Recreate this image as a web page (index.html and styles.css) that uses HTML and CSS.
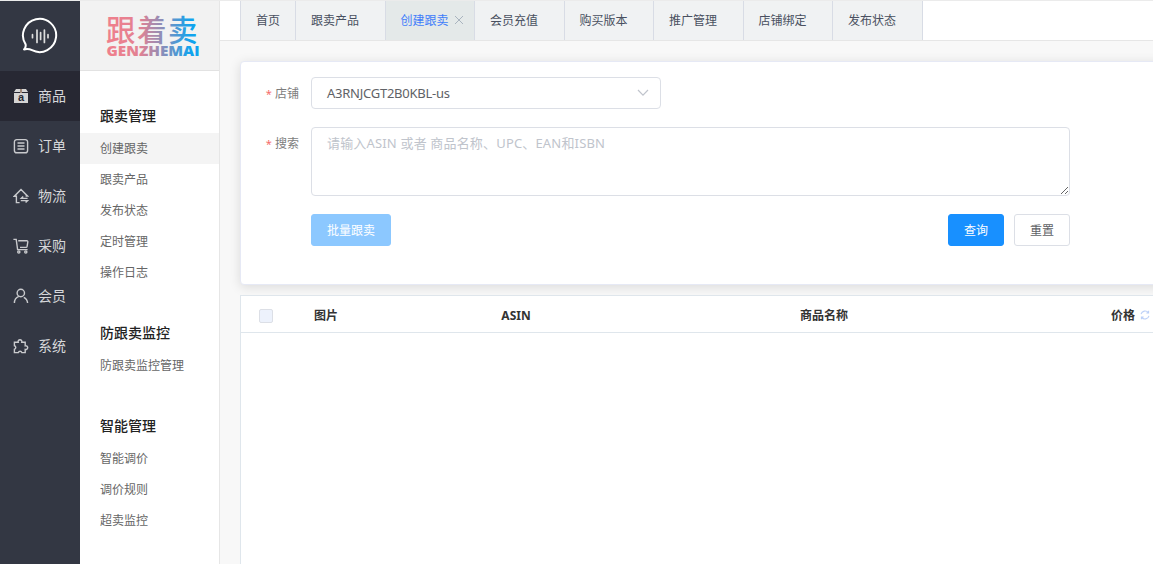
FILE: index.html
```html
<!DOCTYPE html>
<html lang="zh-CN">
<head>
    <meta charset="UTF-8">
    <meta name="viewport" content="width=device-width, initial-scale=1.0">
    <title>创建跟卖</title>
    <link rel="stylesheet" href="styles.css">
</head>
<body>
    <div class="app">
        <nav class="sidebar">
            <div class="logo">
                <svg width="38" height="40" viewBox="0 0 38 40" fill="none" stroke="#fff" stroke-linecap="round">
                    <path d="M5.6 28.4A16.6 16.6 0 1 1 12 34.2Q8.5 32.4 4 33.4Q6.2 31.4 5.6 28.4" stroke-width="2" stroke-linejoin="round"/>
                    <path d="M12.5 18.7v3M17 14v12.5M20.6 16.5v7M24.4 14v12.5M28 18.7v3" stroke-width="1.7" stroke="#ddd"/>
                </svg>
            </div>
            <a class="nav-item active">
                <svg class="nav-icon" viewBox="0 0 16 16">
                    <path d="M3 1h4v3H1zM9 1h4l2 3H9zM1 5h14v10H1z" fill="#d4d4d4"/>
                    <path d="M7 1h2v4H7z" fill="#a08878"/>
                    <text x="8" y="13.4" class="box-letter">a</text>
                </svg>
                <span>商品</span>
            </a>
            <a class="nav-item">
                <svg class="nav-icon line" viewBox="0 0 16 16">
                    <path d="M3.8 1.6h8.4a2.4 2.4 0 0 1 2.4 2.4v8.4a2.4 2.4 0 0 1-2.4 2.4H3.8a2.4 2.4 0 0 1-2.4-2.4V4a2.4 2.4 0 0 1 2.4-2.4zM4.5 5h7M4.5 8h7M4.5 11h7"/>
                </svg>
                <span>订单</span>
            </a>
            <a class="nav-item">
                <svg class="nav-icon line" viewBox="0 0 16 16">
                    <path d="M6.6 14.6H3.4V8.2H1.4L8 1.6l6.4 6.4h-1.8M14.6 10.4H8.2l2-2M7.8 12.6h6.8l-2 2"/>
                </svg>
                <span>物流</span>
            </a>
            <a class="nav-item">
                <svg class="nav-icon line" viewBox="0 0 16 16">
                    <path d="M.4 1.4h2.8l1.4 10.2h10M5.2 2.8h8.6q1.2 0 1 1.2l-.7 4.4q-.2 1-1.1 1H7"/>
                    <circle cx="5.8" cy="14" r="1.1"/>
                    <circle cx="12.8" cy="14" r="1.1"/>
                </svg>
                <span>采购</span>
            </a>
            <a class="nav-item">
                <svg class="nav-icon line" viewBox="0 0 16 16">
                    <circle cx="7.8" cy="5" r="3.7"/>
                    <path d="M1.4 15c0-3.2 1.8-5.6 4.4-6.6M10.8 9.4c2.2 1.1 3.6 3 3.8 5.6"/>
                </svg>
                <span>会员</span>
            </a>
            <a class="nav-item">
                <svg class="nav-icon line" viewBox="0 0 16 16">
                    <path d="M1.4 4.2h3.8a1.9 1.9 0 1 1 3.6 0h3.4v3.6a1.9 1.9 0 1 1 0 3.6v3.2H8.9a1.9 1.9 0 0 0-3.6 0H1.4v-3.4a1.8 1.8 0 0 0 0-3.5z"/>
                </svg>
                <span>系统</span>
            </a>
        </nav>

        <aside class="submenu">
            <div class="brand">
                <svg width="100" height="48" viewBox="0 0 100 48">
                    <defs>
                        <linearGradient id="brandFill" gradientUnits="userSpaceOnUse" x1="2" y1="0" x2="94" y2="0">
                            <stop offset="0" stop-color="#f07f8c"/>
                            <stop offset=".36" stop-color="#e28193"/>
                            <stop offset=".68" stop-color="#6e92c6"/>
                            <stop offset=".9" stop-color="#12a3ee"/>
                        </linearGradient>
                    </defs>
                    <text x="1" y="27" class="brand-cn">跟着卖</text>
                    <text x="1.5" y="41.5" class="brand-en" textLength="93" lengthAdjust="spacingAndGlyphs">GENZHEMAI</text>
                </svg>
            </div>
            <div class="menu-group">
                <h3>跟卖管理</h3>
                <a class="active">创建跟卖</a>
                <a>跟卖产品</a>
                <a>发布状态</a>
                <a>定时管理</a>
                <a>操作日志</a>
            </div>
            <div class="menu-group">
                <h3>防跟卖监控</h3>
                <a>防跟卖监控管理</a>
            </div>
            <div class="menu-group">
                <h3>智能管理</h3>
                <a>智能调价</a>
                <a>调价规则</a>
                <a>超卖监控</a>
            </div>
        </aside>

        <main class="main">
            <div class="tabs">
                <a class="tab home">首页</a>
                <a class="tab">跟卖产品</a>
                <a class="tab active">创建跟卖
                    <svg class="close" width="10" height="10" viewBox="0 0 10 10"><path d="M1 1l8 8M9 1l-8 8"/></svg>
                </a>
                <a class="tab">会员充值</a>
                <a class="tab">购买版本</a>
                <a class="tab">推广管理</a>
                <a class="tab">店铺绑定</a>
                <a class="tab">发布状态</a>
            </div>

            <section class="card">
                <div class="form-row">
                    <label><i>*</i> 店铺</label>
                    <div class="select">
                        <span>A3RNJCGT2B0KBL-us</span>
                        <svg width="12" height="8" viewBox="0 0 12 8"><path d="M1 1l5 5.2L11 1"/></svg>
                    </div>
                </div>
                <div class="form-row">
                    <label><i>*</i> 搜索</label>
                    <textarea class="search" placeholder="请输入ASIN 或者 商品名称、UPC、EAN和ISBN"></textarea>
                </div>
                <div class="buttons">
                    <button class="btn disabled">批量跟卖</button>
                    <div class="right">
                        <button class="btn primary">查询</button>
                        <button class="btn">重置</button>
                    </div>
                </div>
            </section>

            <section class="table">
                <div class="table-head">
                    <div><span class="checkbox"></span></div>
                    <div>图片</div>
                    <div>ASIN</div>
                    <div>商品名称</div>
                    <div>价格
                        <svg class="refresh" width="10" height="10" viewBox="0 0 12 12"><path d="M1.2 5A5 5 0 0 1 10 3.2M10.3.8v2.8H7.6M10.8 7A5 5 0 0 1 2 8.8M1.7 11.2V8.4h2.7"/></svg>
                    </div>
                </div>
            </section>
        </main>
    </div>
</body>
</html>
```
FILE: styles.css
```css
* {
    box-sizing: border-box;
}
body {
    margin: 0;
    height: 100vh;
    overflow: hidden;
    font-family: "Noto Sans", "Noto Sans CJK SC", sans-serif;
    font-size: 12px;
    color: #606266;
    background: #f8f8f8;
}
.app {
    display: flex;
    height: 100vh;
    border-top: 1px solid #ebebeb;
}

/* left dark nav */
.sidebar {
    flex: none;
    width: 80px;
    background: #333743;
}
.logo {
    display: flex;
    height: 70px;
    padding: 15px 0 0 20px;
}
.nav-item {
    display: flex;
    align-items: center;
    gap: 9px;
    height: 50px;
    padding-left: 13px;
    font-size: 14px;
    color: #d6d7da;
}
.nav-item span {
    padding-bottom: 2px;
}
.nav-item.active {
    background: #272833;
}
.nav-icon {
    width: 16px;
    height: 16px;
}
.line {
    fill: none;
    stroke: #c9cacd;
    stroke-width: 1.4;
}
.box-letter {
    font: bold 11px "Liberation Sans", sans-serif;
    text-anchor: middle;
    fill: #272833;
}

/* second level menu */
.submenu {
    flex: none;
    width: 140px;
    background: #fff;
    border-right: 1px solid #e6e6e6;
}
.brand {
    height: 70px;
    padding: 13px 0 0 25px;
    background: #f2f2f2;
    border-bottom: 1px solid #e2e2e2;
}
.brand svg {
    display: block;
}
.brand-cn {
    font: 500 29.5px "Noto Sans CJK SC", sans-serif;
    letter-spacing: 1.5px;
    fill: url(#brandFill);
}
.brand-en {
    font: 800 14px "Open Sans", sans-serif;
    fill: url(#brandFill);
}
.menu-group {
    padding-top: 28px;
}
.menu-group h3 {
    margin: 0;
    padding-left: 20px;
    font-size: 14px;
    font-weight: 500;
    line-height: 34px;
    color: #222;
}
.menu-group a {
    display: block;
    padding-left: 20px;
    line-height: 31px;
    color: #666;
}
.menu-group a.active {
    background: #f4f4f4;
}

/* tabs */
.main {
    flex: 1;
    min-width: 0;
    overflow: hidden;
    display: flex;
    flex-direction: column;
}
.tabs {
    flex: none;
    display: flex;
    height: 40px;
    padding-left: 20px;
    background: #fff;
    border-bottom: 1px solid #e6e6e6;
}
.tab {
    display: flex;
    align-items: center;
    flex: none;
    width: 89.5px;
    padding: 0 0 1px 15px;
    background: #f0f2f3;
    border-right: 1px solid #d8dce5;
    color: #495060;
}
.tab.home {
    width: 56px;
    border-left: 1px solid #d8dce5;
}
.tab.active {
    background: #e4e9e9;
    color: #3f7dfa;
}
.close {
    margin-left: 5px;
    fill: none;
    stroke: #a9b4bf;
}

/* search form */
.card {
    flex: none;
    width: 1000px;
    height: 224px;
    margin: 20px 0 0 20px;
    padding: 15px 0 0 15px;
    background: #fff;
    border: 1px solid #e6e9f5;
    border-radius: 4px;
    box-shadow: 0 2px 12px rgba(0, 0, 0, 0.12);
}
.form-row {
    display: flex;
    margin-bottom: 18px;
}
.form-row label {
    width: 55px;
    padding-right: 12px;
    line-height: 34px;
    height: 32px;
    text-align: right;
    color: #7d7d7d;
}
.form-row i {
    font-style: normal;
    font-size: 11px;
    color: #f56c6c;
}
.select {
    display: flex;
    align-items: center;
    justify-content: space-between;
    width: 350px;
    height: 32px;
    padding: 0 11px 0 15px;
    border: 1px solid #dcdfe6;
    border-radius: 4px;
    font-size: 13px;
    letter-spacing: -0.25px;
}
.select svg {
    fill: none;
    stroke: #c0c4cc;
    stroke-width: 1.2;
}
.search {
    width: 759px;
    height: 69px;
    padding: 5px 15px;
    border: 1px solid #dcdfe6;
    border-radius: 4px;
    font: inherit;
    font-size: 13px;
    line-height: 20px;
    letter-spacing: 0.17px;
    resize: vertical;
}
.search::placeholder {
    color: #c0c4cc;
}
.buttons {
    display: flex;
    justify-content: space-between;
    width: 759px;
    margin-left: 55px;
}
.right {
    display: flex;
    gap: 10px;
}
.btn {
    height: 32px;
    padding: 0 15px;
    background: #fff;
    border: 1px solid #dcdfe6;
    border-radius: 3px;
    font: inherit;
    color: #606266;
}
.btn.primary {
    background: #1890ff;
    border-color: #1890ff;
    color: #fff;
}
.btn.disabled {
    background: #8cc8ff;
    border-color: #8cc8ff;
    color: #fff;
}

/* result table */
.table {
    flex: 1;
    width: 1050px;
    margin: 10px 0 0 20px;
    background: #fff;
    border: 1px solid #dfe6ec;
    border-bottom: 0;
}
.table-head {
    display: grid;
    grid-template-columns: 50px 70px 310px 306px 307px;
    height: 37px;
    border-bottom: 1px solid #dfe6ec;
    font-weight: bold;
    color: #333;
}
.table-head div {
    display: flex;
    align-items: center;
    justify-content: center;
    padding-top: 2px;
}
.checkbox {
    width: 14px;
    height: 14px;
    margin-top: 2px;
    background: #edf2fc;
    border: 1px solid #dcdfe6;
    border-radius: 2px;
}
.refresh {
    margin-left: 5px;
    fill: none;
    stroke: #bcd0f7;
    stroke-width: 1.3;
}
```
